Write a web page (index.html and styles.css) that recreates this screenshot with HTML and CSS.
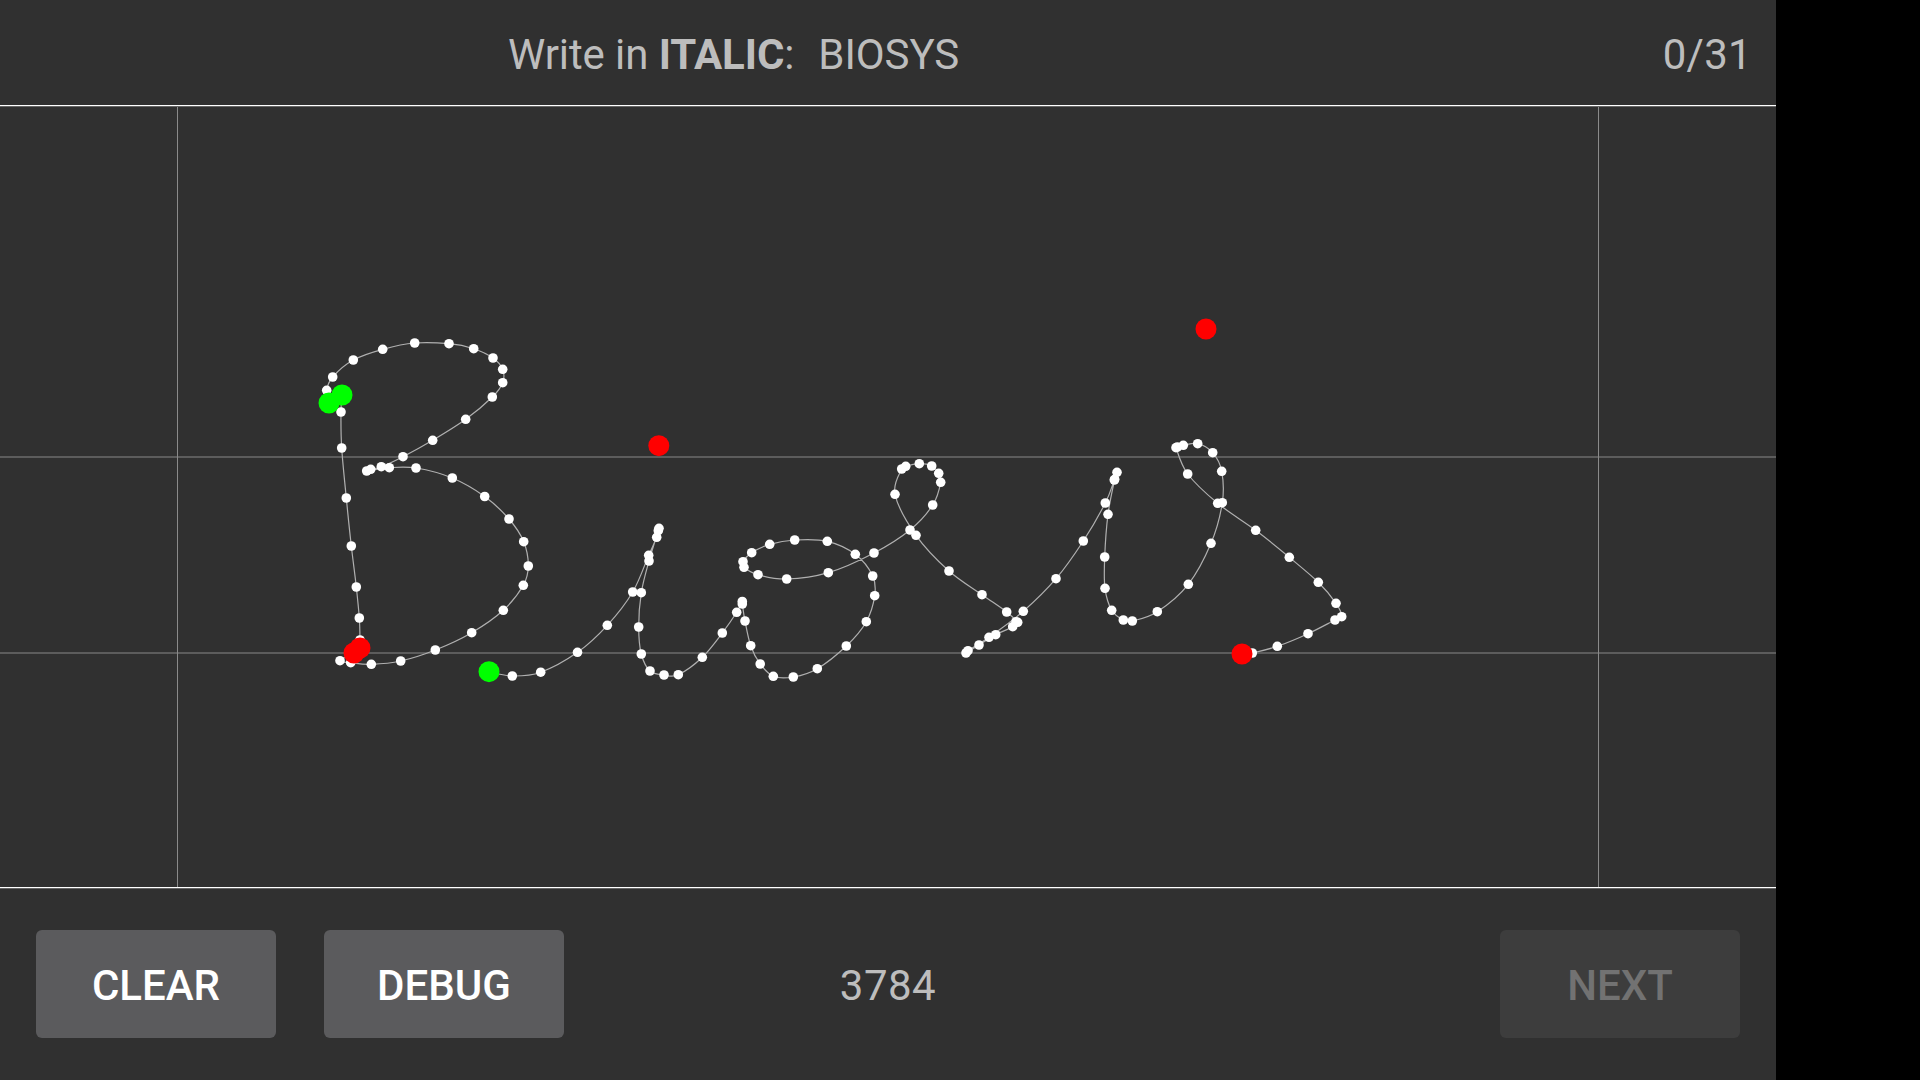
FILE: index.html
```html
<!DOCTYPE html>
<html lang="en">
<head>
<meta charset="utf-8">
<title>Write in ITALIC</title>
<link rel="stylesheet" href="styles.css">
</head>
<body>
<main class="stage">
  <header class="prompt">
    <p class="prompt-text">Write in <b>ITALIC</b>:<span class="prompt-word">BIOSYS</span></p>
    <p class="progress">0/31</p>
  </header>
  <section class="canvas">
    <svg id="ink" class="ink" viewBox="0 107 1776 780" xmlns="http://www.w3.org/2000/svg" aria-label="Handwriting canvas">
      <line class="guide" x1="0" y1="457" x2="1776" y2="457"/>
      <line class="guide" x1="0" y1="653" x2="1776" y2="653"/>
      <line class="guide-v" x1="177.5" y1="107" x2="177.5" y2="887"/>
      <line class="guide-v" x1="1598.5" y1="107" x2="1598.5" y2="887"/>
    </svg>
  </section>
  <footer class="actions">
    <div class="action-group">
      <button class="btn" type="button">CLEAR</button>
      <button class="btn" type="button">DEBUG</button>
    </div>
    <span class="counter">3784</span>
    <div class="action-group action-group-end">
      <button class="btn btn-disabled" type="button" disabled>NEXT</button>
    </div>
  </footer>
</main>
<script src="script.js"></script>
</body>
</html>
```

FILE: styles.css
```css
* { box-sizing: border-box; }
html, body { margin: 0; height: 100%; background: #000; }
body { font-family: Roboto, "Liberation Sans", sans-serif; }

.stage {
  width: 1776px;
  height: 1080px;
  background: #303030;
  display: flex;
  flex-direction: column;
}

.prompt {
  height: 106px;
  flex: none;
  display: flex;
  align-items: center;
  justify-content: space-between;
  padding: 3px 24px 0 508px;
  border-bottom: 1px solid #fff;
  color: #bdbdbd;
  font-size: 42px;
}
.prompt p { margin: 0; }
.prompt-text { letter-spacing: -0.1px; }
.prompt-text b { font-weight: 700; }
.prompt-word { margin-left: 24px; }
.progress { letter-spacing: 0.3px; }

.canvas { flex: none; height: 781px; border-top: 1px solid #666; }
.ink { display: block; width: 1776px; height: 780px; }
.guide { stroke: #6b6b6b; stroke-width: 1.5; }
.guide-v { stroke: #8a8a8a; stroke-width: 1; }
.stroke { fill: none; stroke: #b0b0b0; stroke-width: 1.2; }
.dot { fill: #fff; }
.start { fill: #00ff00; }
.end { fill: #ff0000; }

.actions {
  flex: 1;
  display: grid;
  grid-template-columns: 1fr auto 1fr;
  align-items: center;
  padding: 0 36px;
  border-top: 1px solid #fff;
  box-shadow: inset 0 1px 0 #666;
}
.action-group { display: flex; gap: 48px; }
.action-group-end { justify-content: flex-end; }
.counter { color: #bdbdbd; font-size: 42px; letter-spacing: 0.5px; padding-top: 2px; }

.btn {
  width: 240px;
  height: 108px;
  border: 0;
  border-radius: 6px;
  background: #5b5b5d;
  color: #fff;
  font-family: inherit;
  font-size: 42px;
  font-weight: 500;
  padding: 2px 0 0;
}
.btn-disabled { background: #3d3d3d; color: #727272; }
```

FILE: script.js
```js
var strokes = [
  { from: [342,395], to: [360,648], pts: [[341,412],[341.7,448],[346.3,498],[351.3,546],[356.3,587],[359.3,618],[360,640]] },
  { from: [329,403], to: [354,653], pts: [[326.7,390.3],[332.7,377],[353.3,360],[382.7,349.3],[414.7,343],[449,343.7],[473.7,348.7],[493,358],[502.7,369.3],[502.7,382.7],[492.3,397],[465.7,419.3],[432.7,440.3],[403,456.7],[381.3,466.7],[370.7,469.3],[366.7,471],[389.3,467.7],[416,468],[452.3,478],[484.7,496.5],[509,519],[523.7,541.7],[528.3,566],[523.3,585.3],[503.3,610.3],[471.7,632.7],[435.3,650],[400.7,661],[371.3,664.3],[350.7,662.7],[340,660.7]] },
  { from: [489,671.7], to: [1242,654], pts: [[512.3,676],[540.7,672.2],[577.5,652.3],[607.3,625.3],[632.7,592],[648.7,555.3],[656.7,537.3],[658.3,530.7],[659,528.3],[649,561],[641.3,592.7],[638.7,627],[641.3,654],[650,671],[664,675],[678.3,674.7],[702.3,657.3],[722.3,633],[736.7,612.3],[742.3,601.5],[742.3,604],[745,621],[750.7,645.7],[760.2,664],[773.3,676.3],[793.3,677],[817.3,668.7],[846.3,646],[866.3,621.7],[874.7,595.7],[872.7,576],[855.3,554.3],[827.3,541.3],[794.7,540],[769.7,544.3],[751.7,552.7],[743,561.7],[744,567.3],[758,574.7],[786.7,579],[828.3,572.7],[874,553],[910,530],[932.7,505],[940.7,482.3],[938.7,473.3],[931.7,466],[919.3,463.7],[905.7,466.3],[901.7,469],[895,494.3],[916,535.3],[949,571],[982,594.7],[1006.7,612],[1017.7,622.3],[1016,621.7],[1012.7,626.7],[995.7,634.7],[979,645],[966,653],[968,650.7],[989,637.3],[1023.3,611.3],[1056,578.7],[1083.3,541],[1105.3,503],[1114.3,480],[1117,472.3],[1114.7,479.3],[1108,514.3],[1104.7,557],[1105,588.3],[1111.7,610.3],[1123.3,620],[1132.3,621],[1157.3,611.7],[1188.3,584.3],[1211,543.3],[1222.3,502.7],[1221.7,471.3],[1212.7,452.7],[1197.7,443.7],[1183.3,445.3],[1177.3,447],[1176,447.7],[1187.7,474],[1217.7,503.3],[1255.7,530.3],[1289.3,557.3],[1318.3,582.3],[1336,603.3],[1341.7,616.7],[1335,620],[1308,633.7],[1277.3,646.3],[1252.3,653]] }
];
var lone = [[658.8,445.7],[1206,329]];

var svg = document.getElementById("ink");
var NS = "http://www.w3.org/2000/svg";

function make(tag, attrs) {
  var el = document.createElementNS(NS, tag);
  for (var k in attrs) el.setAttribute(k, attrs[k]);
  svg.appendChild(el);
  return el;
}

function smooth(p) {
  var d = "M" + p[0][0] + " " + p[0][1];
  for (var i = 0; i < p.length - 1; i++) {
    var a = p[Math.max(i - 1, 0)], b = p[i], c = p[i + 1], e = p[Math.min(i + 2, p.length - 1)];
    d += " C" + (b[0] + (c[0] - a[0]) / 6).toFixed(1) + " " + (b[1] + (c[1] - a[1]) / 6).toFixed(1) +
         " " + (c[0] - (e[0] - b[0]) / 6).toFixed(1) + " " + (c[1] - (e[1] - b[1]) / 6).toFixed(1) +
         " " + c[0] + " " + c[1];
  }
  return d;
}

strokes.forEach(function (s) {
  make("path", { "class": "stroke", d: smooth([s.from].concat(s.pts, [s.to])) });
});
strokes.forEach(function (s) {
  s.pts.forEach(function (q) { make("circle", { "class": "dot", cx: q[0], cy: q[1], r: 4.8 }); });
});
strokes.forEach(function (s) {
  make("circle", { "class": "start", cx: s.from[0], cy: s.from[1], r: 10.5 });
});
strokes.forEach(function (s) {
  make("circle", { "class": "end", cx: s.to[0], cy: s.to[1], r: 10.5 });
});
lone.forEach(function (q) { make("circle", { "class": "end", cx: q[0], cy: q[1], r: 10.5 }); });
```
